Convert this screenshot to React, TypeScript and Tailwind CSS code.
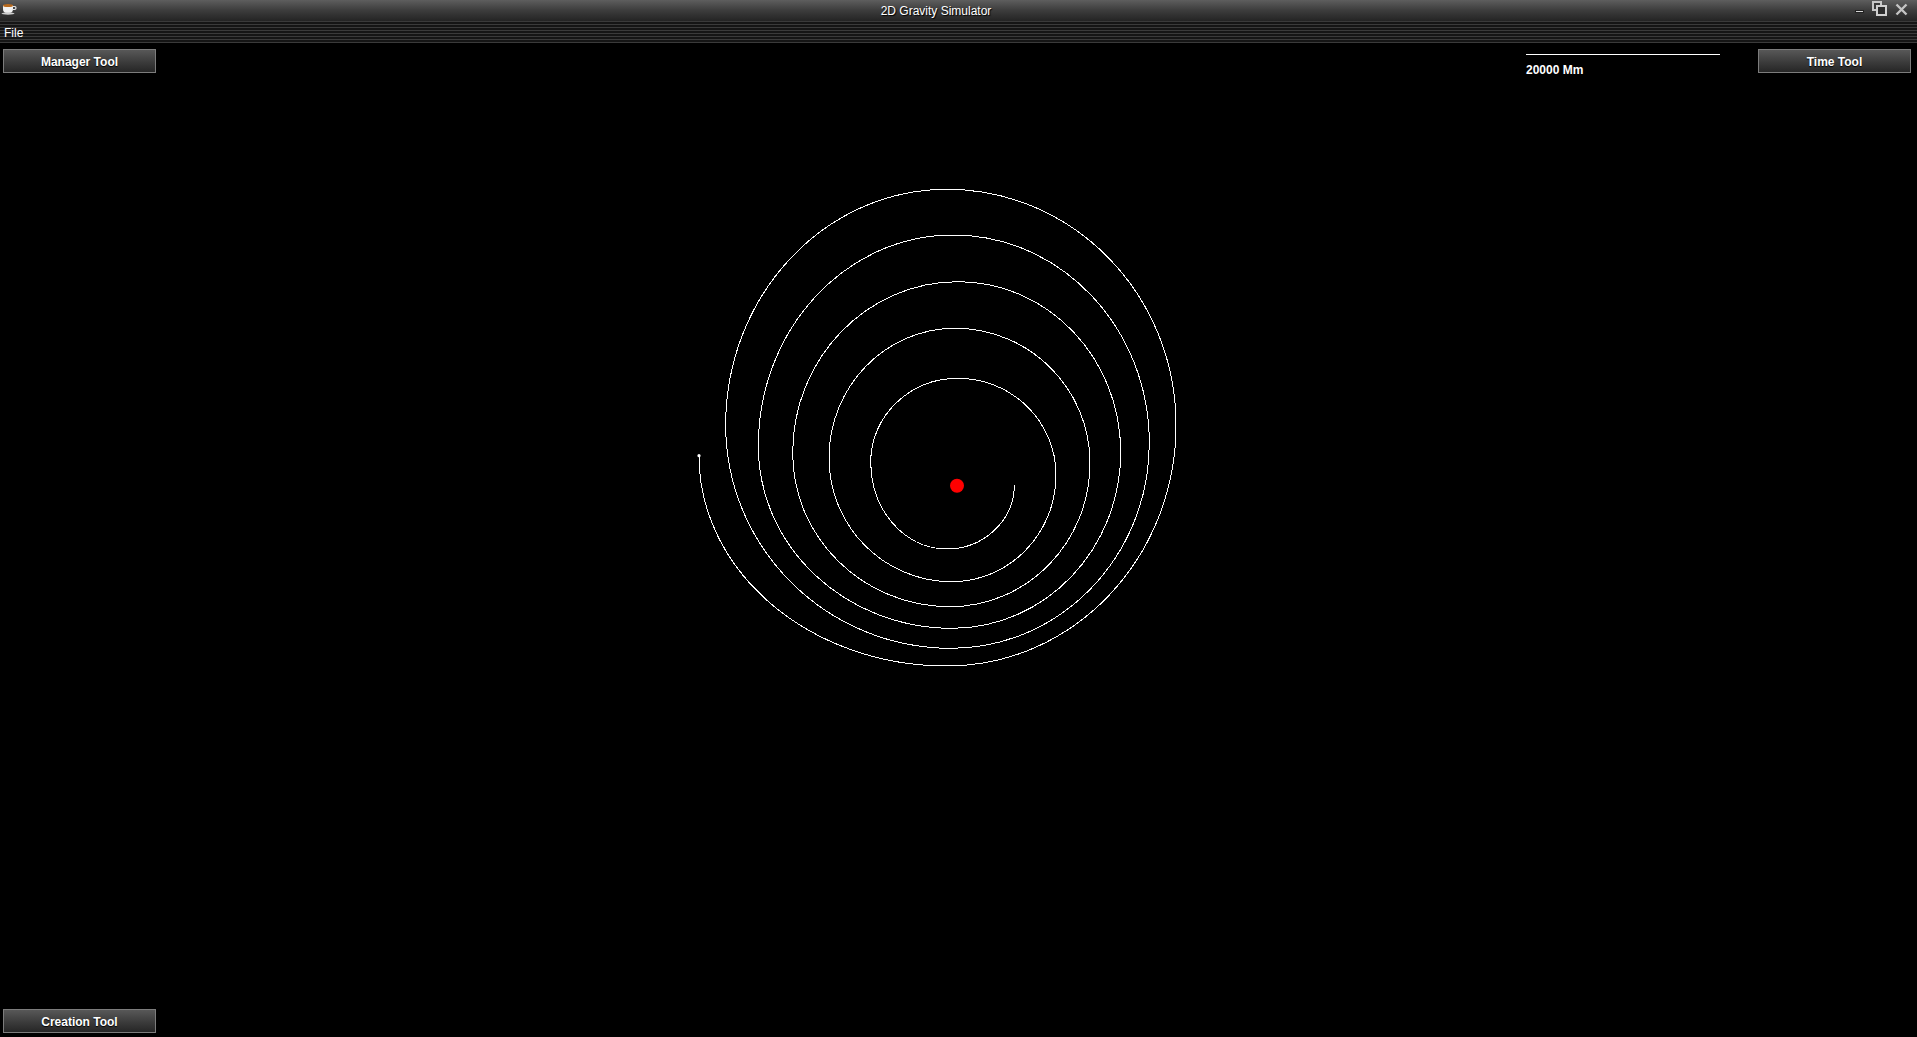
import React from "react";

// extreme points of the orbit trail, one per quarter turn (page coords)
const trail: [number, number][] = [
  [1014.3, 485],
  [946.7, 549],
  [870.7, 462],
  [958, 378.3],
  [1056, 475],
  [951.7, 581.7],
  [829, 458],
  [955, 328.3],
  [1090, 463],
  [950, 606.7],
  [792.7, 453],
  [958, 281.7],
  [1120.7, 452],
  [952, 628.3],
  [758.3, 446],
  [953, 235],
  [1149.3, 443],
  [951, 648.3],
  [725.7, 425],
  [947, 189.3],
  [1176, 425],
  [947, 666],
  [699, 455.7],
];

function trailPath() {
  const k = 0.5523;
  let d = `M${trail[0][0]} ${trail[0][1]}`;
  for (let i = 0; i < trail.length - 1; i++) {
    const [ax, ay] = trail[i];
    const [bx, by] = trail[i + 1];
    let c1: [number, number];
    let c2: [number, number];
    if (i % 2 === 0) {
      // vertical tangent at A, horizontal at B
      c1 = [ax, ay + k * (by - ay)];
      c2 = [bx + k * (ax - bx), by];
    } else {
      c1 = [ax + k * (bx - ax), ay];
      c2 = [bx, by + k * (ay - by)];
    }
    d += ` C${c1[0].toFixed(1)} ${c1[1].toFixed(1)} ${c2[0].toFixed(1)} ${c2[1].toFixed(1)} ${bx} ${by}`;
  }
  return d;
}

function ToolButton({ label }: { label: string }) {
  return (
    <button className="w-[153px] h-[24px] pt-[2px] border border-[#7c7c7c] bg-gradient-to-b from-[#585858] to-[#262626] text-white text-[12px] font-bold leading-none [text-shadow:0_1px_1px_#000]">
      {label}
    </button>
  );
}

function CupIcon() {
  return (
    <svg width="16" height="14" viewBox="0 0 16 14">
      <path d="M2 4 h10 v4 a4 4 0 0 1 -4 4 h-2 a4 4 0 0 1 -4 -4 z" fill="#f2f2f2" />
      <ellipse cx="7" cy="4.5" rx="5" ry="1.6" fill="#b86a1e" />
      <path d="M12 5.5 h1.5 a1.5 1.5 0 0 1 0 3 h-1.8" fill="none" stroke="#e8e8e8" strokeWidth="1.2" />
      <ellipse cx="7" cy="12.5" rx="6.5" ry="1.2" fill="#cfcfcf" />
    </svg>
  );
}

export default function App() {
  return (
    <div
      className="relative w-[1917px] h-[1037px] bg-black flex flex-col overflow-hidden text-white"
      style={{ fontFamily: '"Liberation Sans", Arial, sans-serif' }}
    >
      {/* Title bar */}
      <div className="h-[21px] flex items-center bg-gradient-to-b from-[#5e5e5e] via-[#3c3c3c] to-[#242424]">
        <div className="w-[17px] pl-[1px] pt-[1px] flex items-start self-stretch">
          <CupIcon />
        </div>
        <div className="flex-1 text-center text-[12px] leading-none text-white [text-shadow:1px_1px_1px_#000]">
          2D Gravity Simulator
        </div>
        <div className="w-[62px] h-full flex items-start pt-[1px] gap-[8px]">
          <div className="mt-[9px] w-[9px] h-[3px] bg-[#d4d4d4] border border-[#222]" />
          <div className="relative w-[15px] h-[15px]">
            <div className="absolute left-0 top-0 w-[10px] h-[10px] border-2 border-[#c8c8c8] bg-[#3a3a3a]" />
            <div className="absolute left-[4px] top-[4px] w-[11px] h-[11px] border-2 border-[#d0d0d0] bg-[#2c2c2c]" />
          </div>
          <svg width="13" height="13" viewBox="0 0 13 13" className="mt-[2px]">
            <path d="M1.5 1.5 L11.5 11.5 M11.5 1.5 L1.5 11.5" stroke="#c4c4c4" strokeWidth="2.4" />
          </svg>
        </div>
      </div>

      {/* Menu bar */}
      <div className="h-[22px] flex items-center pt-[2px] px-[4px] bg-[repeating-linear-gradient(to_bottom,#3a3a3a_0px,#3a3a3a_1px,#151515_1px,#151515_3px)]">
        <span className="text-[12px] leading-none text-white">File</span>
      </div>

      {/* Simulation canvas */}
      <div className="relative flex-1 flex flex-col justify-between pt-[6px] pb-[4px] px-[3px]">
        <svg
          className="absolute left-0 top-[-43px] pointer-events-none"
          width="1917"
          height="1037"
          viewBox="0 0 1917 1037"
        >
          <path d={trailPath()} fill="none" stroke="#ffffff" strokeWidth="1" shapeRendering="crispEdges" />
          <circle cx="699" cy="455.7" r="1.6" fill="#ffffff" />
          <circle cx="957" cy="485.7" r="7" fill="#ff0000" />
        </svg>

        <div className="relative flex items-start justify-between">
          <ToolButton label="Manager Tool" />
          <div className="flex items-start gap-[38px] pr-[3px]">
            <div className="w-[194px] pt-[5px]">
              <div className="h-[1px] bg-white" />
              <div className="mt-[9px] text-[12px] font-bold leading-none">20000 Mm</div>
            </div>
            <ToolButton label="Time Tool" />
          </div>
        </div>

        <div className="relative flex">
          <ToolButton label="Creation Tool" />
        </div>
      </div>
    </div>
  );
}
